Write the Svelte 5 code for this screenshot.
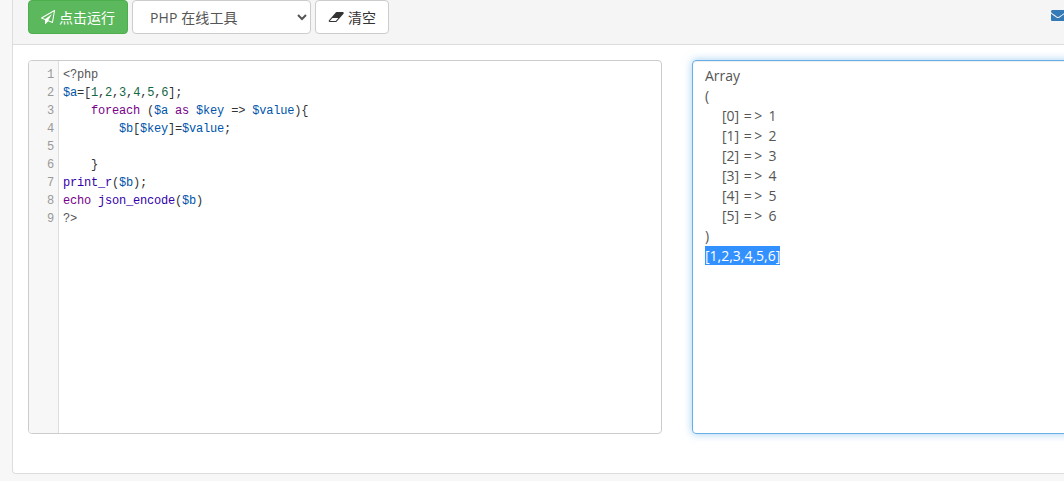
<script>
  const codeLines = [
    [['meta', '<?php']],
    [['var', '$a'], ['', '=['], ['num', '1'], ['', ','], ['num', '2'], ['', ','], ['num', '3'], ['', ','], ['num', '4'], ['', ','], ['num', '5'], ['', ','], ['num', '6'], ['', '];']],
    [['', '    '], ['kw', 'foreach'], ['', ' ('], ['var', '$a'], ['', ' '], ['kw', 'as'], ['', ' '], ['var', '$key'], ['', ' => '], ['var', '$value'], ['', '){']],
    [['', '        '], ['var', '$b'], ['', '['], ['var', '$key'], ['', ']='], ['var', '$value'], ['', ';']],
    [['', ' ']],
    [['', '    }']],
    [['fn', 'print_r'], ['', '('], ['var', '$b'], ['', ');']],
    [['kw', 'echo'], ['', ' '], ['fn', 'json_encode'], ['', '('], ['var', '$b'], ['', ')']],
    [['meta', '?>']]
  ];

  const values = [1, 2, 3, 4, 5, 6];
</script>

<div class="panel">
  <div class="heading">
    <button class="btn run">
      <svg class="icon" viewBox="0 0 1792 1792"><path d="M1764 11q33 24 27 64l-256 1536q-5 29-32 45-14 8-31 8-11 0-24-5l-527-215-298 327q-18 21-47 21-14 0-23-4-19-7-30-23.5t-11-36.5v-452l-472-193q-37-14-40-55-3-39 32-59l1664-960q35-21 68 2zm-342 1499l221-1323-1434 827 336 137 863-639-478 797z"/></svg>
      点击运行
    </button>
    <select class="tool">
      <option>PHP 在线工具</option>
    </select>
    <button class="btn clear">
      <svg class="icon eraser" viewBox="0 0 1984 1792"><path d="M960 1408l336-384h-768l-336 384h768zm1013-1077q15 34 9.5 71.5t-30.5 65.5l-896 1024q-38 44-96 44h-768q-38 0-69.5-20.5t-47.5-54.5q-15-34-9.5-71.5t30.5-65.5l896-1024q38-44 96-44h768q38 0 70 20.5t47 54.5z"/></svg>
      清空
    </button>
    <svg class="mail" viewBox="0 0 1792 1792"><path d="M1792 710v794q0 66-47 113t-113 47h-1472q-66 0-113-47t-47-113v-794q44 49 101 87 362 246 497 345 57 42 92.5 65.5t94.5 48 110 24.5h2q51 0 110-24.5t94.5-48 92.5-65.5q170-123 498-345 57-39 100-87zm0-294q0 79-49 151t-122 123q-376 261-468 325-10 7-42.5 30.5t-54 38-52 32.5-57.5 27-50 9h-2q-23 0-50-9t-57.5-27-52-32.5-54-38-42.5-30.5q-91-64-262-182.5t-205-142.5q-62-42-117-115.5t-55-136.5q0-78 41.5-130t118.5-52h1472q65 0 112.5 47t47.5 113z"/></svg>
  </div>
  <div class="body">
    <div class="editor">
      <div class="gutter">
        {#each codeLines as _, i}
          <div>{i + 1}</div>
        {/each}
      </div>
      <div class="code">
        {#each codeLines as line}
          <div class="line">{#each line as [cls, text]}<span class={cls}>{text}</span>{/each}</div>
        {/each}
      </div>
    </div>
    <div class="result">
      <div>Array</div>
      <div>(</div>
      {#each values as n, i}
        <div class="indent">[{i}] <span class="arrow">=&gt;</span> {n}</div>
      {/each}
      <div>)</div>
      <div><span class="selected">[1,2,3,4,5,6]</span></div>
    </div>
  </div>
</div>

<style>
  :global(body) {
    background: #f7f7f7;
    height: 481px;
    overflow: hidden;
    font-family: "Open Sans", "Noto Sans CJK SC", sans-serif;
    font-size: 14px;
    color: #555;
  }

  .panel {
    width: 1400px;
    margin-left: 12px;
    background: #fff;
    border: 1px solid #ddd;
    border-top: 0;
    border-radius: 0 0 4px 4px;
    box-sizing: border-box;
    height: 474px;
  }

  .heading {
    display: flex;
    align-items: center;
    gap: 4px;
    height: 45px;
    box-sizing: border-box;
    padding: 0 15px 10px;
    background: #f5f5f5;
    border-bottom: 1px solid #ddd;
  }

  .btn {
    display: flex;
    align-items: center;
    justify-content: center;
    gap: 4px;
    height: 34px;
    box-sizing: border-box;
    border: 1px solid #ccc;
    border-radius: 4px;
    background: #fff;
    color: #333;
    font-family: "Noto Sans CJK SC", sans-serif;
    font-size: 14px;
    padding: 0;
  }

  .run {
    width: 100px;
    background: #5cb85c;
    border-color: #4cae4c;
    color: #fff;
  }

  .clear {
    width: 74px;
  }

  .icon {
    width: 14px;
    height: 14px;
    fill: currentColor;
  }

  .eraser {
    width: 16px;
  }

  .tool {
    width: 179px;
    height: 34px;
    box-sizing: border-box;
    border: 1px solid #ccc;
    border-radius: 4px;
    background: #fff;
    color: #555;
    padding: 0 13px;
    font-family: "Open Sans", "Noto Sans CJK SC", sans-serif;
    font-size: 14px;
    letter-spacing: 0.1px;
  }

  .mail {
    width: 14px;
    height: 14px;
    fill: #337ab7;
    position: absolute;
    left: 1051px;
    top: 8px;
  }

  .body {
    display: grid;
    grid-template-columns: 634px 634px;
    gap: 30px;
    padding: 15px;
  }

  .editor {
    display: flex;
    height: 374px;
    box-sizing: border-box;
    border: 1px solid #ccc;
    border-radius: 4px;
    overflow: hidden;
    font-family: "Liberation Mono", monospace;
    font-size: 12px;
    letter-spacing: -0.2px;
    line-height: 18px;
    color: #333;
  }

  .gutter {
    width: 30px;
    box-sizing: border-box;
    padding: 5px 4px 0 0;
    text-align: right;
    color: #999;
    background: #f7f7f7;
    border-right: 1px solid #ddd;
  }

  .code {
    padding: 5px 0 0 4px;
    white-space: pre;
  }

  .line {
    height: 18px;
  }

  .meta { color: #555; }
  .var { color: #05a; }
  .num { color: #164; }
  .kw { color: #708; }
  .fn { color: #30a; }

  .result {
    height: 374px;
    box-sizing: border-box;
    padding: 5px 12px;
    border: 1px solid #66afe9;
    border-radius: 4px;
    box-shadow: inset 0 1px 1px rgba(0, 0, 0, 0.075), 0 0 8px rgba(102, 175, 233, 0.6);
    line-height: 20px;
  }

  .indent {
    padding-left: 17px;
  }

  .arrow {
    letter-spacing: 2.5px;
    margin-left: 1px;
  }

  .selected {
    background: #3390ff;
    color: #fff;
  }
</style>
